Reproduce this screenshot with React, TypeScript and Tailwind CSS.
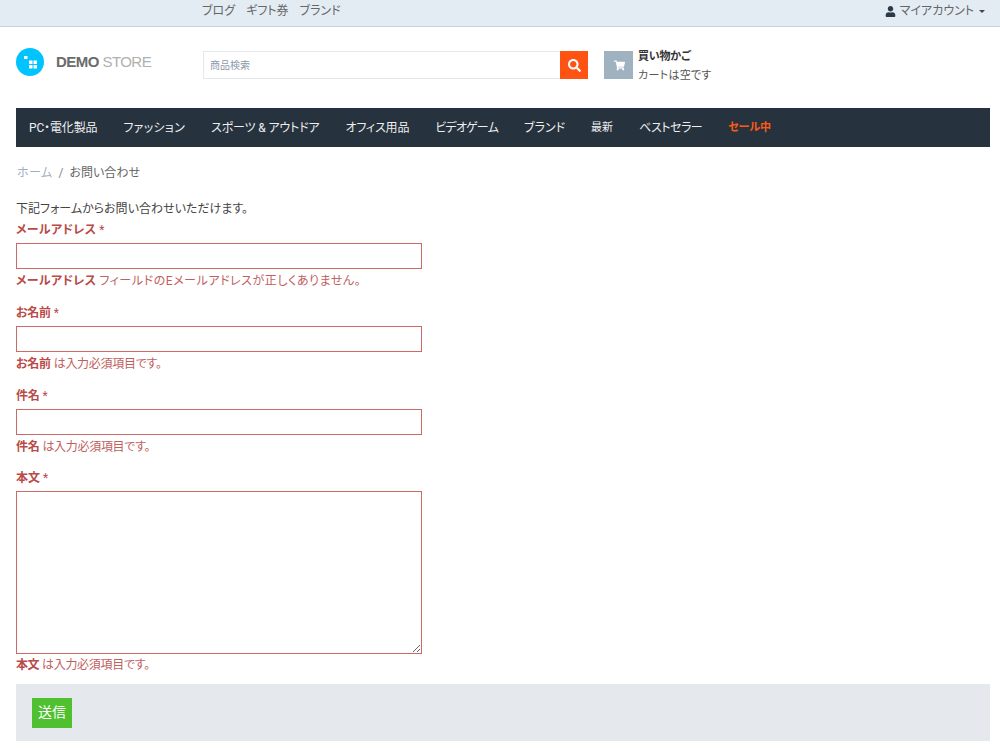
import { FaUser, FaSearch, FaShoppingCart } from "react-icons/fa";

const topLinks = ["ブログ", "ギフト券", "ブランド"];
const navItems = [
    { label: "PC・電化製品", className: "tracking-[-0.15px]" },
    { label: "ファッション", className: "tracking-[0.3px]" },
    { label: "スポーツ & アウトドア", className: "tracking-[-0.15px]" },
    { label: "オフィス用品", className: "tracking-[-0.2px]" },
    { label: "ビデオゲーム", className: "tracking-[-0.8px]" },
    { label: "ブランド", className: "" },
    { label: "最新", className: "text-[11px]" },
    { label: "ベストセラー", className: "tracking-[-0.5px]" },
];

const fields = [
    {
        label: "メールアドレス",
        message: "フィールドのEメールアドレスが正しくありません。",
        boxClass: "mb-[16px]",
        labelClass: "tracking-[0.3px]",
        messageClass: "tracking-[0.55px]",
    },
    {
        label: "お名前",
        message: "は入力必須項目です。",
        boxClass: "mb-[16px]",
        labelClass: "tracking-[-0.3px]",
        messageClass: "tracking-[-0.3px]",
    },
    {
        label: "件名",
        message: "は入力必須項目です。",
        boxClass: "mb-[15px]",
        labelClass: "tracking-[-0.3px]",
        messageClass: "tracking-[-0.3px]",
    },
];

function Logo() {
    return (
        <div className="flex items-center w-[187px] shrink-0">
            <svg width="28" height="28" viewBox="0 0 28 28">
                <circle cx="14" cy="14" r="14" fill="#00c3ff" />
                <rect x="8" y="8" width="3.5" height="3" fill="#fff" />
                <rect x="13" y="12.5" width="3.5" height="3.5" fill="#fff" />
                <rect x="17.5" y="12.5" width="3.5" height="3.5" fill="#fff" />
                <rect x="13" y="17" width="3.5" height="3.5" fill="#fff" />
                <rect x="17.5" y="17" width="3.5" height="3.5" fill="#fff" />
            </svg>
            <div className="ml-3 whitespace-nowrap text-[15px] leading-5 tracking-[-0.55px] font-['Liberation_Sans',sans-serif]">
                <span className="font-bold text-[#6b6b6b]">DEMO</span>{" "}
                <span className="text-[#b0b0b0]">STORE</span>
            </div>
        </div>
    );
}

export default function App() {
    return (
        <div className="min-h-[752px] bg-white text-[12px] text-[#555] [font-feature-settings:'palt'] font-['Roboto','Noto_Sans_CJK_JP',sans-serif]">
            <div className="h-[27px] bg-[#e4ecf3] border-b border-[#bcd6e6] flex items-center justify-between pl-[202px] pr-[15px] pb-[4px]">
                <div className="flex gap-[11px] text-[#666]">
                    {topLinks.map((link) => (
                        <a key={link}>{link}</a>
                    ))}
                </div>
                <div className="flex items-center text-[#666]">
                    <FaUser className="text-[#2c3a47] w-[11px] h-[11px] mr-[4px]" />
                    <span>マイアカウント</span>
                    <span className="ml-[5px] border-x-[3px] border-t-[3px] border-x-transparent border-t-[#444]" />
                </div>
            </div>

            <div className="pl-4 pr-[10px]">
                <div className="flex items-start pt-[21px] h-[81px]">
                    <Logo />
                    <div className="flex w-[385px] h-[28px] mt-[3px] shrink-0">
                        <div className="flex-1 border border-[#e3e8ee] border-r-0 flex items-center px-[6px] text-[10px] text-[#8d9aa8]">
                            商品検索
                        </div>
                        <button className="w-[28px] bg-[#ff5314] flex items-center justify-center">
                            <FaSearch className="w-[13px] h-[13px] text-white" />
                        </button>
                    </div>
                    <div className="flex ml-4 mt-[3px]">
                        <div className="w-[29px] h-[28px] pl-[2px] bg-[#a0b2c0] flex items-center justify-center">
                            <FaShoppingCart className="w-[11px] h-[11px] text-white" />
                        </div>
                        <div className="ml-[5px] -mt-[4px] leading-[19px] text-[#555]">
                            <div className="font-bold text-[#333] text-[11px] tracking-[-0.2px]">買い物かご</div>
                            <div className="text-[11px] tracking-[0.3px]">カートは空です</div>
                        </div>
                    </div>
                </div>

                <div className="h-[39px] bg-[#26323e] flex items-center px-[13px] pt-[1px] gap-[26px] text-[#eee]">
                    {navItems.map((item) => (
                        <a key={item.label} className={item.className}>
                            {item.label}
                        </a>
                    ))}
                    <a className="font-bold text-[11px] text-[#ff5a14]">セール中</a>
                </div>

                <div className="mt-[18px] flex items-center h-[16px] text-[#666]">
                    <a className="ml-px text-[#9fb0bf] tracking-[0.4px]">ホーム</a>
                    <span className="mx-[6px] text-[#888]">/</span>
                    <span>お問い合わせ</span>
                </div>

                <p className="mt-[19px] leading-[18px] text-[#444]">下記フォームからお問い合わせいただけます。</p>

                <form className="mt-[5px]">
                    {fields.map((field) => (
                        <div key={field.label} className={field.boxClass}>
                            <label className="block font-bold leading-[14px] text-[#b94a48]">
                                <span className={field.labelClass}>{field.label}</span> <span className="font-normal">*</span>
                            </label>
                            <input className="block w-[406px] h-[26px] mt-[6px] border border-[#cc6a68] bg-white" />
                            <div className="mt-[3px] leading-[18px] text-[#b94a48]">
                                <strong className={field.labelClass}>{field.label}</strong>{" "}
                                <span className={field.messageClass + " text-[#c0605e]"}>{field.message}</span>
                            </div>
                        </div>
                    ))}
                    <div>
                        <label className="block font-bold leading-[14px] text-[#b94a48]">
                            本文 <span className="font-normal">*</span>
                        </label>
                        <textarea className="block w-[406px] h-[163px] mt-[6px] border border-[#cc6a68] bg-white" />
                        <div className="mt-[2px] leading-[18px] text-[#b94a48]">
                            <strong className="tracking-[-0.5px]">本文</strong>{" "}
                            <span className="tracking-[-0.3px] text-[#c0605e]">は入力必須項目です。</span>
                        </div>
                    </div>
                    <div className="mt-[10px] h-[57px] bg-[#e5e9ed] flex items-center pl-4">
                        <button type="button" className="w-[40px] h-[30px] bg-[#4fc02f] text-white text-[14px]">
                            送信
                        </button>
                    </div>
                </form>
            </div>
        </div>
    );
}
